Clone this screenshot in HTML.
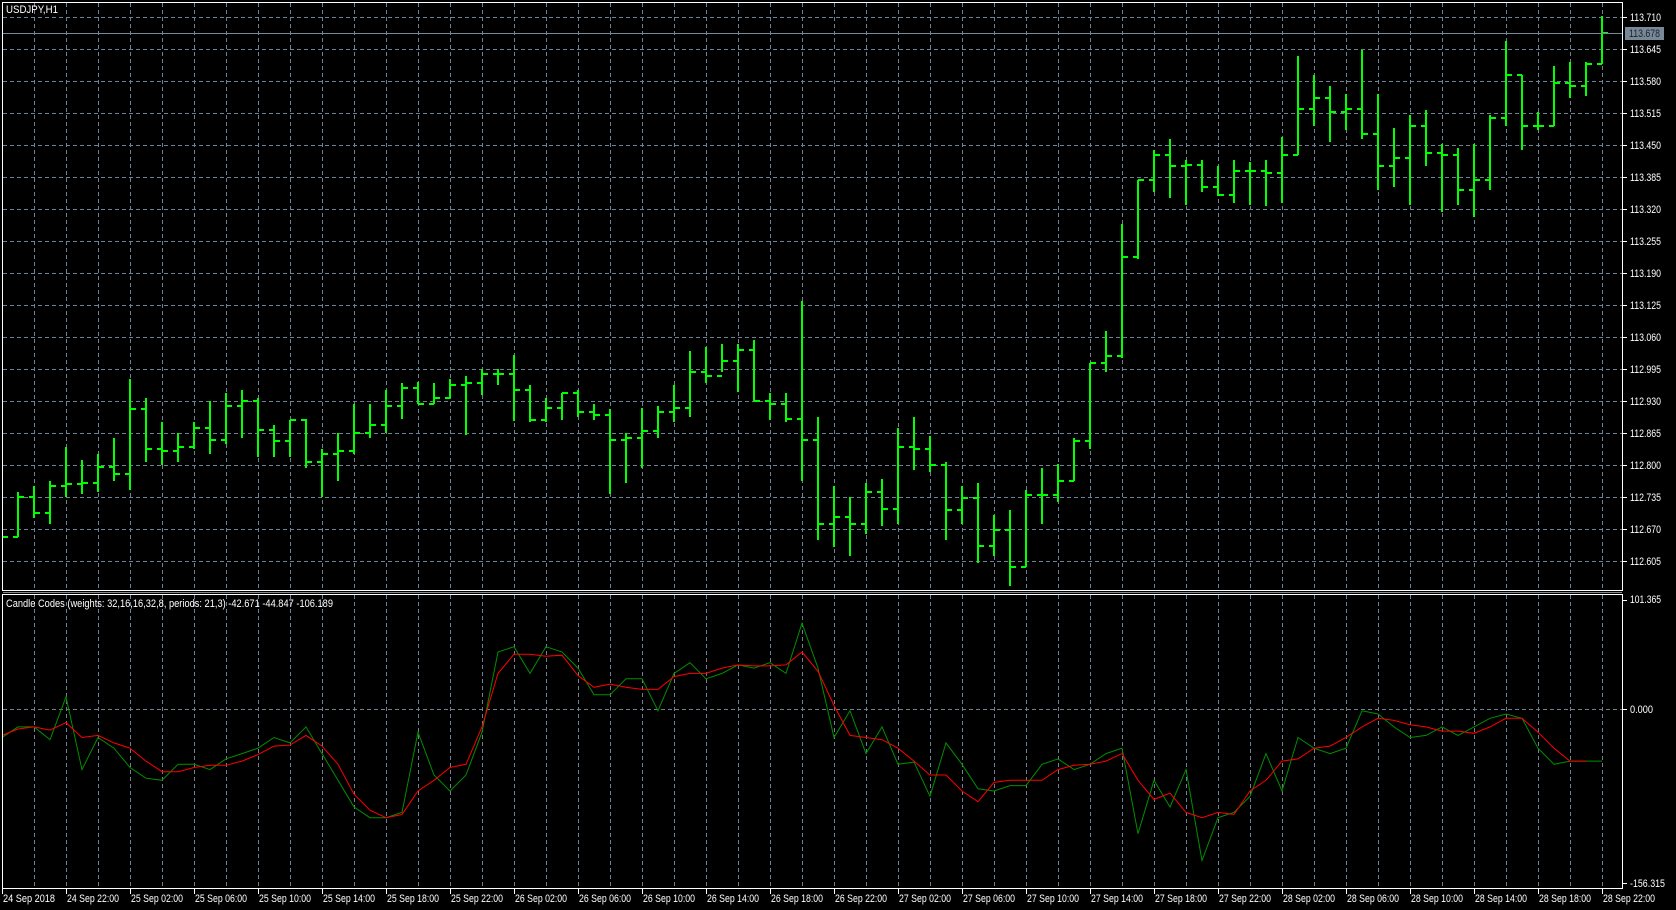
<!DOCTYPE html>
<html><head><meta charset="utf-8"><style>
html,body{margin:0;padding:0;background:#000;width:1676px;height:910px;overflow:hidden}
svg{display:block}
text{font-family:"Liberation Sans",sans-serif;font-size:11px;fill:#fff}
</style></head><body>
<svg id="s" width="1676" height="910" xmlns="http://www.w3.org/2000/svg"></svg>
<script>
var S=document.getElementById('s'),o='';
var K=1.0689;
function L(x1,y1,x2,y2,c,w,d){o+='<line x1="'+x1+'" y1="'+y1+'" x2="'+x2+'" y2="'+y2+'" stroke="'+c+'" stroke-width="'+(w||1)+'"'+(d?' stroke-dasharray="'+d+'"':'')+' shape-rendering="crispEdges"/>';}
function T(x,y,t,tl,f){o+='<text x="'+x+'" y="'+y+'"'+(tl?' textLength="'+tl+'" lengthAdjust="spacingAndGlyphs"':'')+(f?' style="fill:'+f+'"':'')+'>'+t+'</text>';}
var G='#6f8195';
for(var x=34;x<1623;x+=32){L(x+.5,3,x+.5,590,G,1,'4,3');L(x+.5,595,x+.5,888,G,1,'4,3');}
var p=['113.710','113.645','113.580','113.515','113.450','113.385','113.320','113.255','113.190','113.125','113.060','112.995','112.930','112.865','112.800','112.735','112.670','112.605'];
for(var i=0;i<p.length;i++){var y=17+i*32;L(3,y+.5,1622,y+.5,G,1,'4,3');L(1623,y+.5,1627,y+.5,'#fff');T(1630,y+4,p[i],31);}
L(3,709.5,1622,709.5,G,1,'4,3');
var B=[[495,505,502,502],[460,502,502,465],[455,485,465,480],[450,490,480,455],[418,465,455,453],[430,462,453,452],[425,460,452,437],[410,450,437,443],[355,458,443,383],[372,432,383,420],[395,435,420,422],[405,432,422,418],[395,420,418,400],[375,425,400,412],[368,415,412,380],[365,410,380,375],[372,428,375,402],[398,428,402,413],[393,428,413,393],[392,438,393,432],[420,465,432,425],[405,450,425,422],[378,425,422,405],[378,410,405,398],[365,405,398,380],[358,392,380,363],[357,378,363,378],[358,378,378,372],[355,372,372,360],[352,407,360,358],[345,370,358,350],[345,360,350,350],[332,394,350,365],[360,395,365,393],[372,395,393,382],[368,393,382,368],[365,390,368,385],[378,393,385,388],[383,462,388,412],[405,452,412,410],[382,438,410,403],[380,410,403,385],[360,395,385,382],[328,390,382,348],[325,358,348,352],[322,348,352,338],[322,367,338,327],[318,375,327,375],[368,393,375,378],[368,395,378,392],[282,450,392,412],[390,505,412,490],[455,512,490,484],[465,520,484,490],[452,500,490,460],[448,492,460,476],[400,490,476,418],[390,440,418,420],[408,442,420,435],[432,505,435,477],[455,490,477,466],[452,527,466,511],[482,520,511,496],[477,548,496,530],[458,530,530,463],[438,490,463,463],[434,470,463,450],[410,450,450,413],[340,420,413,340],[310,348,340,333],[210,335,333,240],[168,242,240,168],[140,180,168,145],[130,185,145,155],[150,192,155,154],[150,180,154,175],[155,183,175,182],[150,190,182,160],[152,192,160,160],[150,193,160,162],[128,190,162,145],[52,145,145,102],[70,118,102,92],[80,133,92,105],[88,122,105,102],[47,130,102,125],[88,178,125,155],[120,175,155,148],[108,192,148,118],[103,155,118,143],[135,198,143,145],[138,192,145,178],[135,203,178,168],[108,178,168,110],[38,118,110,70],[70,140,70,118],[105,122,118,118],[62,118,118,78],[58,92,78,80],[58,90,80,60],[15,60,60,31]];
for(var h=0;h<B.length;h++){var b=B[h],x=2+16*h;
 var hy=Math.round(b[0]*K),ly=Math.round(b[1]*K),oy=Math.round(b[2]*K),cy=Math.round(b[3]*K);
 if(x<4){L(3,oy,8,oy,'#0f0',2);continue;}
 L(x,hy,x,ly,'#0f0',2);L(x-5,oy,x,oy,'#0f0',2);L(x,cy,x+6,cy,'#0f0',2);}
L(3,33.5,1622,33.5,'#778899');
o+='<rect x="1625" y="27" width="39" height="13" fill="#778899"/>';T(1629,37,'113.678',31,'#222');
var g=[690,680,680,692,652,720,690,700,718,728,730,715,715,720,710,705,700,690,695,680,705,730,755,765,765,760,685,725,740,725,685,610,605,630,605,610,625,650,650,635,635,665,630,620,635,630,622,625,620,630,583,625,690,665,705,680,715,713,745,695,715,738,740,735,735,715,710,720,715,705,700,780,730,755,720,805,765,760,745,705,740,690,700,705,700,665,668,680,690,688,680,688,680,672,668,672,700,715,712,712,712];
var r=[688,682,680,683,676,690,688,695,700,712,722,722,718,716,716,712,706,698,697,688,698,715,743,758,765,762,740,730,718,715,680,630,612,612,614,613,632,643,640,643,645,645,633,630,630,625,622,623,623,622,610,628,660,688,690,692,700,712,725,725,740,750,732,730,730,730,720,716,715,712,705,730,748,742,760,765,760,762,740,730,712,710,700,698,690,680,672,674,678,680,684,684,686,680,672,672,685,700,712,712];
function P(a,c){var s='';for(var i=0;i<a.length;i++)s+=(i?'L':'M')+(2+16*i)+' '+(a[i]*K).toFixed(1);o+='<path d="'+s+'" fill="none" stroke="'+c+'" stroke-width="1"/>';}
P(g,'#008f00');P(r,'#ff0000');
T(6,607,'Candle Codes (weights: 32,16,16,32,8, periods: 21,3) -42.671 -44.847 -106.189',327);
T(1630,603,'101.365',31);T(1630,713,'0.000',23);T(1630,887,'-156.315',35);
L(1623,600.5,1627,600.5,'#fff');L(1623,709.5,1627,709.5,'#fff');L(1623,883.5,1627,883.5,'#fff');
o+='<rect x="2.5" y="2.5" width="1620" height="588" fill="none" stroke="#fff"/>';
o+='<rect x="2.5" y="594.5" width="1620" height="294" fill="none" stroke="#fff"/>';
L(3,592.5,1622,592.5,'#888');
var tl=['24 Sep 2018','24 Sep 22:00','25 Sep 02:00','25 Sep 06:00','25 Sep 10:00','25 Sep 14:00','25 Sep 18:00','25 Sep 22:00','26 Sep 02:00','26 Sep 06:00','26 Sep 10:00','26 Sep 14:00','26 Sep 18:00','26 Sep 22:00','27 Sep 02:00','27 Sep 06:00','27 Sep 10:00','27 Sep 14:00','27 Sep 18:00','27 Sep 22:00','28 Sep 02:00','28 Sep 06:00','28 Sep 10:00','28 Sep 14:00','28 Sep 18:00','28 Sep 22:00'];
for(var i=0;i<tl.length;i++){var x=i==0?2:2+64*i;L(x+.5,889,x+.5,894,'#fff');T(x+1,902,tl[i],52);}
T(6,13,'USDJPY,H1',52);
S.innerHTML=o;
</script>
</body></html>
